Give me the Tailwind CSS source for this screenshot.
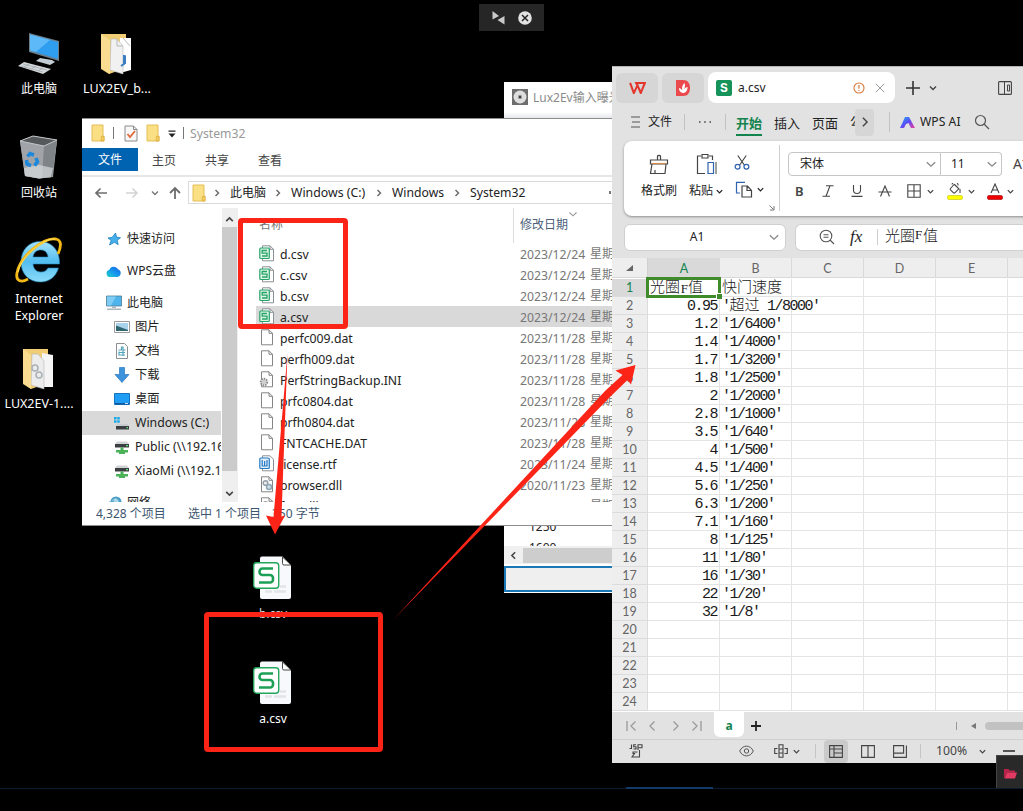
<!DOCTYPE html>
<html lang="zh-CN">
<head>
<meta charset="utf-8">
<title>Desktop</title>
<script src="https://cdn.jsdelivr.net/npm/@tailwindcss/browser@4"></script>
</head>
<body class="bg-black">
<svg class="absolute h-0 w-0">
  <defs>
    <linearGradient id="cg" x1="0" x2="1" y1="1" y2="0"><stop offset="0" stop-color="#22d3c5"/><stop offset=".5" stop-color="#1695f0"/><stop offset="1" stop-color="#1460d8"/></linearGradient>
    <symbol id="folder" viewBox="0 0 14 18"><path d="M1 1h11v11h1v5H1z" fill="#fbdf84" stroke="#e3bd57"/><path d="M10.500 12.500h2.500V17h-3z" fill="#f6cf62" stroke="#dcae3c" stroke-width=".8"/></symbol>
    <symbol id="csv" viewBox="0 0 16 17"><path d="M3.500.8h7.500l3.500 3.500v11.500h-11z" fill="#fff" stroke="#8b9096"/><path d="M11 .8v3.500h3.500" fill="none" stroke="#8b9096"/><rect x=".8" y="3" width="9.500" height="10.500" rx="1" fill="#dff3e8" stroke="#23a566" stroke-width="1.200"/><path d="M8 5.500H3.200v2.700H8V11H3" fill="none" stroke="#23a566" stroke-width="1.300"/></symbol>
    <symbol id="page" viewBox="0 0 16 17"><path d="M2.500.8h7.500l3.500 3.500v11.500h-11z" fill="#fff" stroke="#858585"/><path d="M10 .8v3.500h3.500" fill="none" stroke="#858585"/></symbol>
    <symbol id="ini" viewBox="0 0 16 17"><path d="M2.500.8h7.500l3.500 3.500v11.500h-11z" fill="#fff" stroke="#858585"/><path d="M10 .8v3.500h3.500" fill="none" stroke="#858585"/><circle cx="5" cy="11" r="3.200" fill="#eee" stroke="#8a8a8a" stroke-width="2" stroke-dasharray="1.500 .9"/><circle cx="5" cy="11" r="1.300" fill="#fff" stroke="#999" stroke-width=".7"/></symbol>
    <symbol id="dll" viewBox="0 0 16 17"><path d="M2.500.8h7.500l3.500 3.500v11.500h-11z" fill="#fff" stroke="#858585"/><path d="M10 .8v3.500h3.500" fill="none" stroke="#858585"/><circle cx="6.500" cy="7" r="2.300" fill="#eee" stroke="#93a0a8" stroke-width="1.500"/><circle cx="10" cy="11" r="2.500" fill="#cfe0ea" stroke="#8fa6b4" stroke-width="1.500"/></symbol>
    <symbol id="rtf" viewBox="0 0 16 17"><path d="M3.500.8h7.500l3.500 3.500v11.500h-11z" fill="#fff" stroke="#8b9096"/><rect x=".8" y="3" width="9.500" height="10.500" rx="1" fill="#e3f0fb" stroke="#2679c4" stroke-width="1.200"/><path d="M3.200 5v6h4.800V5M5.600 6v5" fill="none" stroke="#2679c4" stroke-width="1.200"/></symbol>
    <symbol id="star" viewBox="0 0 16 16"><path d="M9.500 2l1 4 4 .8-3.300 2.500 1 4.400-3.700-2.400L3.500 14l1.700-4.500L2 7l4.300-.7z" fill="#45b0ea" stroke="#1c80bf" stroke-width=".8"/></symbol>
    <symbol id="cloud" viewBox="0 0 16 16"><path d="M4 14a3.500 3.500 0 0 1-.8-6.900A4.800 4.800 0 0 1 12 6.300a4 4 0 0 1-.5 7.700z" fill="url(#cg)"/></symbol>
    <symbol id="pc" viewBox="0 0 16 16"><path d="M.5 1h15v10H.5z" fill="#4fb4ec" stroke="#4c7b97" stroke-width=".8"/><path d="M1 1.500h9l-5 9H1z" fill="#7fcdf5"/><path d="M6 11.500h4v1.500H6z" fill="#a7b3ba"/><path d="M1 13.500h14v1.500H1z" fill="#a9b5bc"/></symbol>
    <symbol id="pic" viewBox="0 0 16 16"><path d="M.5 2.500h15v11H.5z" fill="#fff" stroke="#9a9a9a"/><path d="M2 4h12v8H2z" fill="#a8d3ea"/><path d="M2 6.500l4 1.500 8 3v1H2z" fill="#2f6670"/></symbol>
    <symbol id="doc" viewBox="0 0 16 16"><path d="M2.500.5h8l3 3v12h-11z" fill="#fff" stroke="#8a8f93"/><path d="M4.500 7h3V4H9v3h2.500M5 9.500h6M5 12h6M5 8.500v4M9 7v6" fill="none" stroke="#55a5bd" stroke-width="1.200"/></symbol>
    <symbol id="down" viewBox="0 0 16 16"><path d="M5.500.5h5v7h4.500L8 15.500 1 7.500h4.500z" fill="#3c93dc" stroke="#2b77bd" stroke-width=".7"/></symbol>
    <symbol id="desk" viewBox="0 0 16 16"><path d="M.5 2.500h15v11H.5z" fill="#1f9cf3" stroke="#1673bf"/><path d="M1 12h14v1.500H1z" fill="#0c5aa0"/><path d="M11 12.200h3v.8h-3z" fill="#fff"/></symbol>
    <symbol id="drive" viewBox="0 0 16 16"><path d="M0 2h2.600v2.600H0zM3.200 2h2.600v2.600H3.200zM0 5.200h2.600v2.600H0zM3.200 5.200h2.600v2.600H3.200z" fill="#1fa8e6"/><path d="M3 9h11l1 2H2z" fill="#c9cdd0"/><path d="M2 11h13v3.500H2z" fill="#3b3f42"/><path d="M12.500 12h1.500v1.200h-1.500z" fill="#5fe37a"/></symbol>
    <symbol id="net" viewBox="0 0 16 16"><path d="M3 2.500h10l2 2.500H1z" fill="#d0d3d5"/><path d="M1 5h14v3.500H1z" fill="#3b3f42"/><path d="M12 6h2v1.200h-2z" fill="#5fe37a"/><path d="M6.500 8.500h3V11H14v2.500h-3V15H5v-1.500H2V11h4.500z" fill="#4bb25a"/></symbol>
    <symbol id="globe" viewBox="0 0 16 16"><circle cx="10" cy="7" r="5.500" fill="#4a9cc4"/><path d="M6 5l4-2 3 3-2 3H7z" fill="#a8d8ea"/><path d="M1 7.500l7-2.500v9H1z" fill="#5cabc9"/></symbol>
    <symbol id="chev" viewBox="0 0 10 10"><path d="M2 3.500l3 3 3-3" fill="none" stroke="currentColor" stroke-width="1.400"/></symbol>
    <symbol id="thin" viewBox="0 0 10 10"><path d="M1.500 3.500l3.500 3.300 3.500-3.300" fill="none" stroke="currentColor" stroke-width="1.100"/></symbol>
    <symbol id="next" viewBox="0 0 10 10"><path d="M3.500 2l3 3-3 3" fill="none" stroke="currentColor" stroke-width="1.400"/></symbol>
    <symbol id="bigcsv" viewBox="0 0 40 44"><path d="M9 .5h20.500L38 9v32a2 2 0 0 1-2 2H9a2 2 0 0 1-2-2V2.500a2 2 0 0 1 2-2z" fill="#f7f9fc"/><path d="M29.500 1v6.500a1.500 1.500 0 0 0 1.500 1.500h7z" fill="#fff" stroke="#333" stroke-width=".9"/><path d="M12 35.500h7M21 35.500h12M27 30.500h6" stroke="#e2e5e8" stroke-width="2.500"/><rect x=".7" y="6.700" width="25" height="25.500" rx="3" fill="#fff" stroke="#23a55c" stroke-width="1.400"/><path d="M20 12.500H9.500a3 3 0 0 0-3 3v.5a3 3 0 0 0 3 3h7.500a3 3 0 0 1 3 3v1.500a3 3 0 0 1-3 3H6" fill="none" stroke="#1ca056" stroke-width="2.600"/></symbol>
  </defs>
</svg>
<main class="relative h-[811px] w-[1023px] overflow-hidden bg-black font-['Noto_Sans','Noto_Sans_CJK_SC',sans-serif] text-[12px] leading-4">

  <!-- Desktop icons -->
  <div class="absolute left-0 top-[31px] flex w-[78px] flex-col items-center text-[12px] text-white">
    <svg class="h-[44px] w-[44px]" viewBox="0 0 44 44"><path d="M12 2l30 8v20L12 21z" fill="#6d7e8a"/><path d="M13 3.500l28 7.500v17L13 19.500z" fill="#2f9df0"/><path d="M13 3.500l20 5.500-14 12-6-1.500z" fill="#5db9f8"/><path d="M23 27l12 2 3 2-5 3-14-4z" fill="#c3cdd3"/><path d="M7 31l27 7-8 5L1 35z" fill="#d5d9dc"/><path d="M6 33l24 6M4 35l22 6M12 33l-5 3M19 35l-5 3M26 37l-5 3" stroke="#9aa3a8" stroke-width=".7"/></svg>
    <span class="mt-[6px]">此电脑</span>
  </div>
  <div class="absolute left-[78px] top-[31px] flex w-[78px] flex-col items-center text-[12px] text-white">
    <svg class="h-[44px] w-[34px]" viewBox="0 0 34 44"><path d="M1 3h25v34l-17 6-8-5z" fill="#f1cd76"/><path d="M20 7h11v32l-11 3z" fill="#fff"/><path d="M23 26l3-2v9h-5l-1-3z" fill="#3a7fc4"/><path d="M11 8h6l6 7v28l-13-4z" fill="#f1f1f1" stroke="#b5b5b5" stroke-width=".6"/><path d="M17 8v7h6M23 7l7 8" fill="none" stroke="#aaa" stroke-width=".8"/><path d="M24 24v9l-3 2" fill="none" stroke="#3a7fc4" stroke-width="2"/><path d="M1 3l9 6v34l-9-6z" fill="#f9dc90"/></svg>
    <span class="mt-[6px] text-[12.500px]">LUX2EV_b...</span>
  </div>
  <div class="absolute left-0 top-[135px] flex w-[78px] flex-col items-center text-[12px] text-white">
    <svg class="h-[44px] w-[40px]" viewBox="0 0 40 44"><path d="M1 6l13-5 24 4-4 37-14 1.500L6 41z" fill="#9a9fa3"/><path d="M1 6l24 5 13-6-5 37-13 1.500L6 41z" fill="#a0a4a8"/><path d="M25 11l13-6-5 37-10 1z" fill="#7f8488"/><path d="M1 6l13-5 24 4-13 6z" fill="#55595c" stroke="#c3c6c8"/><path d="M5 33l15-3 14 3-2 9-12 1.500L6 41z" fill="#d9dcde" opacity=".7"/><g fill="none" stroke="#1b87dd" stroke-width="3.500"><path d="M8.500 21.500L11 18.500l4 1.500"/><path d="M17 23l1.500 4-3 3.500"/><path d="M12 30.500L8 29l-.5-4"/></g></svg>
    <span class="mt-[6px]">回收站</span>
  </div>
  <div class="absolute left-0 top-[237px] flex w-[78px] flex-col items-center text-center text-[12.400px] text-white">
    <svg class="h-[50px] w-[50px]" viewBox="0 0 50 50"><defs><linearGradient id="ie" x1="0" x2="0" y1="0" y2="1"><stop offset="0" stop-color="#a5e3fb"/><stop offset=".5" stop-color="#53bdf0"/><stop offset="1" stop-color="#8bdcf9"/></linearGradient></defs><path d="M26 4.500c12 0 20 9 19.500 22.500H19c.5 5 3.500 8 8 8 3.500 0 5.500-1.500 7-4h10.500C42 39.500 35.500 45 26.500 45 15 45 7 37 7 25S15 4.500 26 4.500zM19 20h15c-.5-4.500-3-7-7.300-7-4.200 0-7 2.500-7.700 7z" fill="url(#ie)" stroke="#1f7fb8" stroke-width=".6"/><path d="M44 17C48 8 47 3 42 2 30 0 6 19 3 36c-1.500 8 4 10 11 6" fill="none" stroke="#f5b915" stroke-width="2.800"/><path d="M41 2C30 1 8 18 4 35" fill="none" stroke="#ffe468" stroke-width="1"/></svg>
    <span class="mt-[3px] leading-[17px]">Internet<br>Explorer</span>
  </div>
  <div class="absolute left-0 top-[346px] flex w-[78px] flex-col items-center text-[12.500px] text-white">
    <svg class="h-[44px] w-[34px]" viewBox="0 0 34 44"><path d="M1 3h25v34l-17 6-8-5z" fill="#f1cd76"/><path d="M20 7l11 2v32H20z" fill="#f5f5f5"/><path d="M10 8h6l6 7v28l-13-4z" fill="#ececec" stroke="#b5b5b5" stroke-width=".6"/><circle cx="13" cy="22" r="3" fill="none" stroke="#aab2b8" stroke-width="1.600"/><circle cx="17" cy="29" r="3" fill="none" stroke="#aab2b8" stroke-width="1.600"/><path d="M1 3l8 6v34l-8-6z" fill="#f9dc90"/></svg>
    <span class="mt-[6px]">LUX2EV-1....</span>
  </div>
  <div class="absolute left-[234px] top-[556px] flex w-[78px] flex-col items-center text-[12px] text-gray-300">
    <svg class="h-[44px] w-[40px]"><use href="#bigcsv"/></svg><span class="mt-[6px]">b.csv</span>
  </div>
  <div class="absolute left-[234px] top-[661px] flex w-[78px] flex-col items-center text-[12px] text-white">
    <svg class="h-[44px] w-[40px]"><use href="#bigcsv"/></svg><span class="mt-[6px]">a.csv</span>
  </div>

  <!-- Remote session toolbar -->
  <div class="absolute left-[479px] top-[4px] flex h-[27px] w-[65px] items-center justify-center gap-[13px] bg-[#262626]">
    <svg class="h-[14px] w-[13px]" viewBox="0 0 13 14"><path d="M.5 0v8.500L7 5zM12.500 5v8.500L5.500 9z" fill="#c9c9c9"/></svg>
    <svg class="h-[14px] w-[14px]" viewBox="0 0 14 14"><circle cx="7" cy="7" r="6.800" fill="#e2e2e2"/><path d="M4 4l6 6M10 4l-6 6" stroke="#262626" stroke-width="1.500"/></svg>
  </div>

  <!-- Lux2Ev window -->
  <section class="absolute left-[504px] top-[82px] flex h-[511px] w-[108px] flex-col overflow-hidden bg-white">
    <header class="flex h-[30px] shrink-0 items-center gap-[5px] whitespace-nowrap pl-[8px] text-[#8b8b8b]">
      <svg class="h-4 w-4 shrink-0" viewBox="0 0 16 16"><path d="M0 0h16v16H0z" fill="#6d6d6d"/><circle cx="8" cy="8" r="6.500" fill="#dedede"/><circle cx="8" cy="8" r="2.200" fill="#999"/><circle cx="8" cy="8" r="1" fill="#222"/></svg>
      <span class="pt-px">Lux2Ev输入曝光</span>
    </header>
    <div class="h-[406px] shrink-0 bg-gradient-to-b from-white to-gray-200 to-[6px]"></div>
    <div class="flex h-[28px] shrink-0 flex-col overflow-hidden bg-white pl-[25px] text-[12px] leading-[21px] text-[#222]"><span class="-mt-[2px] h-[21px] shrink-0">1250</span><span class="h-[21px] shrink-0">1600</span></div>
    <div class="flex h-[18px] shrink-0 items-center bg-[#f0f0f0]"><svg class="mx-[4px] h-[11px] w-[11px] rotate-90 text-[#444]"><use href="#chev"/></svg><div class="h-[15px] flex-1 bg-[#cdcdcd]"></div></div>
    <div class="mt-[2px] h-[26px] shrink-0 border-2 border-r-0 border-[#1a78b5] bg-[#efefef]"></div>
  </section>

  <!-- File explorer window -->
  <section class="absolute left-[82px] top-[118px] flex h-[408px] w-[530px] flex-col overflow-hidden border-b border-t border-[#8d8d8d] bg-white text-[#222]">
    <header class="flex h-[28px] shrink-0 items-center pl-[9px]">
      <svg class="h-[18px] w-[14px]"><use href="#folder"/></svg>
      <i class="ml-[8px] h-3 w-px bg-[#777]"></i>
      <svg class="ml-[10px] h-[17px] w-[14px]" viewBox="0 0 14 17"><path d="M1 1h8.500L13 4.500V16H1z" fill="#f7f7f7" stroke="#8a8a8a"/><path d="M9.500 1v3.500H13" fill="none" stroke="#8a8a8a"/><path d="M3.500 9l2.500 3 5-6" fill="none" stroke="#e0693a" stroke-width="1.800"/></svg>
      <svg class="ml-[8px] h-[18px] w-[14px]"><use href="#folder"/></svg>
      <svg class="ml-[8px] mt-[2px] h-[8px] w-[8px]" viewBox="0 0 8 8"><path d="M.5.5h7v1.200h-7zM.5 3.500h7L4 7.500z" fill="#222"/></svg>
      <i class="ml-[7px] h-3 w-px bg-[#777]"></i>
      <span class="ml-[6px] pt-px text-[12.200px] text-[#999]">System32</span>
    </header>
    <nav class="flex h-[30px] shrink-0 items-start border-b-2 border-[#e6e6e6] pt-px text-[#444]">
      <span class="flex h-[23px] w-[56px] items-center justify-center bg-[#0063b1] text-white">文件</span>
      <span class="ml-[14px] leading-[26px]">主页</span><span class="ml-[29px] leading-[26px]">共享</span><span class="ml-[29px] leading-[26px]">查看</span>
    </nav>
    <div class="flex h-[31px] shrink-0 items-center pl-[12px] text-[#777]">
      <svg class="h-3 w-[14px]" viewBox="0 0 14 12"><path d="M13 6H2M6.500 1.500L2 6l4.500 4.500" fill="none" stroke="#6d6d6d" stroke-width="1.700"/></svg>
      <svg class="ml-[17px] h-3 w-[14px]" viewBox="0 0 14 12"><path d="M1 6h11M7.500 1.500L12 6l-4.500 4.500" fill="none" stroke="#d4d4d4" stroke-width="1.600"/></svg>
      <svg class="ml-[11px] h-[10px] w-[10px]"><use href="#chev"/></svg>
      <svg class="ml-[8px] h-[14px] w-[14px]" viewBox="0 0 14 14"><path d="M7 13V2M2 7l5-5 5 5" fill="none" stroke="#6d6d6d" stroke-width="1.800"/></svg>
      <div class="ml-[6px] flex h-[23px] flex-1 items-center border border-r-0 border-[#dadada] pl-[3px] text-[12.200px] text-[#222]">
        <svg class="h-[18px] w-[14px]"><use href="#folder"/></svg>
        <svg class="ml-[6px] h-[10px] w-[10px] text-[#666]"><use href="#next"/></svg><span class="ml-[8px] w-[36px] whitespace-nowrap text-[12px]">此电脑</span>
        <svg class="ml-[7px] h-[10px] w-[10px] text-[#666]"><use href="#next"/></svg><span class="ml-[8px] w-[76px] whitespace-nowrap text-[12.300px]">Windows (C:)</span>
        <svg class="ml-[7px] h-[10px] w-[10px] text-[#666]"><use href="#next"/></svg><span class="ml-[8px] w-[53px]">Windows</span>
        <svg class="ml-[7px] h-[10px] w-[10px] text-[#666]"><use href="#next"/></svg><span class="ml-[8px]">System32</span>
        <i class="ml-auto mr-px h-[3px] w-[2px] bg-[#777]"></i>
      </div>
    </div>
    <div class="flex h-[294px] shrink-0 overflow-hidden">
      <aside id="tree" class="flex w-[139px] shrink-0 flex-col overflow-hidden pt-[10px]"></aside>
      <div class="ml-px flex w-4 shrink-0 flex-col bg-[#efefef] pt-[6px] text-[#444]">
        <svg class="mx-[2px] h-[11px] w-[11px] rotate-180"><use href="#chev"/></svg>
        <div class="mt-[2px] h-[244px] w-[15px] bg-[#cbcbcb]"></div>
        <svg class="mx-[2px] mt-[17px] h-[11px] w-[11px]"><use href="#chev"/></svg>
      </div>
      <div class="flex flex-1 flex-col pl-[18px]">
        <div class="flex h-[35px] shrink-0 text-[#4c607a]">
          <span class="w-[257px] pl-[3px] pt-[9px] text-[#777]">名称</span>
          <div class="flex items-start border-l border-[#ddd] pl-[6px] pt-[9px]">修改日期</div>
          <svg class="mt-[1px] h-[10px] w-[10px] text-[#999]"><use href="#thin"/></svg>
        </div>
        <div id="files" class="flex flex-col"></div>
      </div>
    </div>
    <footer class="flex h-[23px] shrink-0 items-center bg-white pl-[14px] text-[#3d5670]">
      <span class="w-[92px]">4,328 个项目</span><span class="w-[84px]">选中 1 个项目</span><span>350 字节</span>
    </footer>
  </section>

  <!-- WPS spreadsheet window -->
  <section class="absolute left-[612px] top-[66px] flex h-[697px] w-[411px] flex-col overflow-hidden border-t border-[#b5b5b5] bg-[#e2e2e2] text-[#222]">
    <header class="flex h-[38px] shrink-0 items-center pl-[4px] pt-[3px]">
      <span class="flex h-[30px] w-[42px] items-center justify-center rounded-md bg-[#d6d6d6]"><svg class="h-[12px] w-[17px]" viewBox="0 0 18 13"><path d="M1 1l4 11L9 3.500 12.500 12 17 1H7.500l4 8" fill="none" stroke="#e5352d" stroke-width="2.200"/></svg></span>
      <span class="ml-[4px] flex h-[30px] w-[42px] items-center justify-center rounded-md bg-[#d6d6d6]"><svg class="h-4 w-[14px]" viewBox="0 0 14 16"><path d="M0 0h7c5 0 7 3.500 7 8s-2 8-7 8H0z" fill="#ea4a4e"/><path d="M6.800 13C4 12.500 3 10.500 3 8c2 .5 3 1.500 3.500 3C5.500 8 6 5 8.500 3c.8 2 .6 4-.5 6.500C9 8 10 7.200 11.500 7c0 3.500-1.500 6-4.700 6z" fill="#fff"/></svg></span>
      <div class="ml-[4px] flex h-[31px] w-[187px] items-center rounded-lg bg-white pl-[8px] pr-[10px]">
        <span class="flex h-4 w-4 items-center justify-center rounded-[2px] bg-[#14935a] font-['Inter',sans-serif] text-[12px] font-bold text-white">S</span>
        <span class="ml-[6px] flex-1 pt-px">a.csv</span>
        <svg class="h-3 w-3" viewBox="0 0 12 12"><circle cx="6" cy="6" r="5" fill="none" stroke="#d9783a" stroke-width="1.100"/><path d="M6 3v3.800M6 8v1" stroke="#d9783a" stroke-width="1.200"/></svg>
        <svg class="ml-[10px] h-[10px] w-[10px]" viewBox="0 0 10 10"><path d="M.8.800l8.400 8.400M9.200.8L.8 9.200" stroke="#9a9a9a"/></svg>
      </div>
      <svg class="ml-[11px] h-[14px] w-[14px]" viewBox="0 0 14 14"><path d="M7 0v14M0 7h14" stroke="#333" stroke-width="1.600"/></svg>
      <svg class="ml-[8px] h-[10px] w-[10px] text-[#444]"><use href="#chev"/></svg>
      <svg class="ml-[60px] h-[14px] w-[14px] shrink-0" viewBox="0 0 14 14"><rect x=".6" y=".6" width="12.800" height="12.800" rx="1" fill="none" stroke="#444" stroke-width="1.100"/><path d="M6.500 1v12M9.500 4h2v6h-2z" fill="none" stroke="#444"/></svg>
    </header>
    <nav class="flex h-[36px] shrink-0 items-center whitespace-nowrap pb-[2px] pl-[19px]">
      <svg class="h-3 w-[9px]" viewBox="0 0 9 12"><path d="M0 1h9M1 6h8M0 11h9" stroke="#555" stroke-width="1.100"/></svg>
      <span class="ml-[8px] w-[24px]">文件</span><i class="ml-[12px] h-4 w-px bg-[#c2c2c2]"></i>
      <svg class="ml-[13px] h-[4px] w-[14px]" viewBox="0 0 14 4"><path d="M1 2h1.500M6.200 2h1.500M11.500 2H13" stroke="#444" stroke-width="1.500"/></svg>
      <i class="ml-[13px] h-4 w-px bg-[#c2c2c2]"></i>
      <span class="ml-[10px] flex h-[27px] w-[26px] flex-col border-b-2 border-[#14844f] pt-[6px] text-[13px] font-bold text-[#14844f]">开始</span>
      <span class="ml-[12px] pt-px text-[13px]">插入</span><span class="ml-[12px] pt-px text-[13px]">页面</span>
      <span class="ml-[12px] w-[5px] overflow-hidden">公</span>
      <span class="flex h-[27px] w-[19px] items-center justify-center rounded bg-[#d6d6d6]"><svg class="h-[14px] w-[14px] text-[#444]" viewBox="0 0 10 10"><path d="M3.500 2l3 3-3 3" fill="none" stroke="currentColor"/></svg></span>
      <i class="ml-[15px] h-5 w-px bg-[#c2c2c2]"></i>
      <svg class="ml-[10px] h-[13px] w-[15px]" viewBox="0 0 15 13"><defs><linearGradient id="ai" x1="0" x2="1" y1="0" y2="1"><stop offset="0" stop-color="#1bb0f5"/><stop offset=".5" stop-color="#5b4df5"/><stop offset="1" stop-color="#f13f9a"/></linearGradient></defs><path d="M5 1h4l6 11h-4L8.500 7 6 8l-2 4H0z" fill="url(#ai)"/></svg>
      <span class="ml-[5px] w-[42px] text-[12.200px]">WPS AI</span>
      <svg class="ml-[12px] h-4 w-4" viewBox="0 0 16 16"><circle cx="6.500" cy="6.500" r="5" fill="none" stroke="#555" stroke-width="1.200"/><path d="M10 10l5 5" stroke="#555" stroke-width="1.300"/></svg>
    </nav>
    <div class="ml-[12px] flex h-[75px] w-[420px] shrink-0 rounded-lg bg-white shadow-sm shadow-black/30">
      <div class="my-1 flex h-[66px] w-[156px] shrink-0 border-r border-[#cfcfcf]">
        <div class="ml-[17px] flex w-[36px] flex-col items-center pt-[8px]">
          <svg class="h-[22px] w-5" viewBox="0 0 20 22"><path d="M8.500 7V3a2 2 0 0 1 3 0v4M1.500 7h17v4h-17zM3 11L1.500 20.500H16L17 11M6 17v3.500" fill="none" stroke="#444" stroke-width="1.200"/><path d="M3 10.500h14" stroke="#d98b4a" stroke-width="1.200"/></svg>
          <span class="mt-[8px] whitespace-nowrap">格式刷</span>
        </div>
        <div class="ml-[12px] flex w-[34px] flex-col pt-[8px]">
          <svg class="ml-[7px] h-[22px] w-[21px]" viewBox="0 0 21 22"><path d="M5 3H1.500v17.500H9M13 3h3.500v4M6 1.500h6V5H6z" fill="none" stroke="#444" stroke-width="1.200"/><path d="M12 9.500h5.500v11H12z" fill="#fff" stroke="#2f63b0" stroke-width="1.200"/><path d="M20 9v12" stroke="#444"/></svg>
          <div class="mt-[8px] flex items-center whitespace-nowrap">粘贴<svg class="ml-[2px] h-[9px] w-[9px] shrink-0" viewBox="0 0 10 10"><use href="#chev"/></svg></div>
        </div>
        <div class="ml-[11px] flex flex-1 flex-col pt-[10px]">
          <svg class="h-4 w-4" viewBox="0 0 16 16"><path d="M3.500.5l7.500 11M12.500.5L5 11.500" stroke="#444" stroke-width="1.200"/><circle cx="3.300" cy="12.500" r="2.600" fill="none" stroke="#2f63b0" stroke-width="1.300"/><circle cx="12.700" cy="12.500" r="2.600" fill="none" stroke="#2f63b0" stroke-width="1.300"/></svg>
          <div class="mt-[11px] flex items-center"><svg class="ml-px h-[17px] w-[18px]" viewBox="0 0 18 16"><path d="M5 11.500H1.500V.8H10" fill="none" stroke="#2f63b0" stroke-width="1.200"/><path d="M7 4.500h5.500L16.500 9v6.500H7zM12 5v4h4" fill="#fff" stroke="#444" stroke-width="1.200"/></svg><svg class="ml-[3px] h-[9px] w-[9px]" viewBox="0 0 10 10"><use href="#chev"/></svg></div>
          <svg class="ml-[35px] mt-[7px] h-[6px] w-[6px] shrink-0" viewBox="0 0 6 6"><path d="M.5.500l4 4M5 1v4H1" fill="none" stroke="#777"/></svg>
        </div>
      </div>
      <div class="flex flex-1 flex-col pl-[8px] pt-[11px]">
        <div class="flex items-center">
          <div class="flex h-[24px] w-[153px] items-center justify-between rounded-l border border-[#c6c6c6] pl-[11px] pr-[3px]"><span>宋体</span><svg class="h-[12px] w-[12px] text-[#888]" viewBox="0 0 10 10"><use href="#thin"/></svg></div>
          <div class="flex h-[24px] w-[61px] items-center justify-between rounded-r border border-l-0 border-[#c6c6c6] pl-[10px] pr-[3px]"><span>11</span><svg class="h-[12px] w-[12px] text-[#888]" viewBox="0 0 10 10"><use href="#thin"/></svg></div>
          <span class="ml-[11px] flex text-[14px] text-[#444]">A<span class="-mt-1 text-[10px]">+</span></span>
        </div>
        <div class="mt-[5px] flex items-center text-[#444]">
          <span class="ml-[7px] w-[9px] text-[13px] font-semibold leading-5">B</span>
          <svg class="ml-[18px] h-3 w-3" viewBox="0 0 12 12"><path d="M4 .8h7.500M.5 11.200H8M8 .8L4 11.200" fill="none" stroke="#444" stroke-width="1.100"/></svg>
          <svg class="ml-[17px] h-3 w-3" viewBox="0 0 12 12"><path d="M2.500 0v5a3.500 3.500 0 0 0 7 0V0M.5 11.400h11" fill="none" stroke="#444" stroke-width="1.100"/></svg>
          <svg class="ml-[15px] h-3 w-[14px]" viewBox="0 0 14 12"><path d="M2.500 11.500L7 1l4.500 10.500M.5 7h13" fill="none" stroke="#444" stroke-width="1.100"/></svg>
          <svg class="ml-[15px] h-[14px] w-[14px]" viewBox="0 0 14 14"><path d="M.8.800h12.400v12.400H.8zM7 1v12M1 7h12" fill="none" stroke="#444" stroke-width="1.100"/></svg>
          <svg class="ml-[5px] h-[9px] w-[9px]" viewBox="0 0 10 10"><use href="#chev"/></svg>
          <svg class="ml-[12px] h-[17px] w-4" viewBox="0 0 16 17"><path d="M7.500 1L3.500 5.500a1 1 0 0 0 0 1.300l3 3a1 1 0 0 0 1.300 0l4-4L7.500 1.500M5 1.500a3 3 0 0 1 6 1M13 6v4" fill="none" stroke="#444" stroke-width="1.100"/><rect x=".5" y="12.500" width="15" height="4" rx="1.500" fill="#ff0" stroke="#c8c818" stroke-width=".7"/></svg>
          <svg class="ml-[4px] h-[9px] w-[9px]" viewBox="0 0 10 10"><use href="#chev"/></svg>
          <svg class="ml-[11px] h-[17px] w-4" viewBox="0 0 16 17"><path d="M4 10L8 1l4 9M5.500 7h5" fill="none" stroke="#444" stroke-width="1.100"/><rect x=".5" y="12.500" width="15" height="4" rx="1.500" fill="#f00000" stroke="#a81414" stroke-width=".7"/></svg>
          <svg class="ml-[3px] h-[9px] w-[9px]" viewBox="0 0 10 10"><use href="#chev"/></svg>
        </div>
      </div>
    </div>
    <div class="flex h-[42px] shrink-0 items-center pl-[12px]">
      <div class="flex h-[27px] w-[162px] shrink-0 items-center rounded-md border border-[#d0d0d0] bg-white pr-[5px]"><span class="flex-1 pl-[1px] text-center text-[12px]">A1</span><svg class="h-[12px] w-[12px] text-[#888]" viewBox="0 0 10 10"><use href="#thin"/></svg></div>
      <div class="ml-[9px] flex h-[27px] flex-1 items-center rounded-l-md border border-r-0 border-[#d0d0d0] bg-white pl-[23px]">
        <svg class="h-4 w-4" viewBox="0 0 16 16"><circle cx="7" cy="7" r="5.800" fill="none" stroke="#555" stroke-width="1.100"/><path d="M4.500 5.700h5M4.500 8.200h5M11 11l4 4" stroke="#555" stroke-width="1.100"/></svg>
        <span class="ml-[15px] w-[16px] font-['Liberation_Serif',serif] text-[17px] italic">fx</span><i class="ml-[11px] h-4 w-px bg-[#ccc]"></i><span class="-mt-[4px] ml-[7px] flex items-center font-['Noto_Sans_CJK_SC',sans-serif] text-[15px] font-light">光圈<span class="w-[8px] font-['Liberation_Serif',serif] text-[13px]">F</span>值</span>
      </div>
    </div>
    <div class="flex h-[20px] shrink-0 border-b border-[#d8d8d8] bg-[#eee] text-center font-['Lato',sans-serif] text-[12.500px] leading-[21px] text-[#666]">
      <span class="flex w-[36px] items-center justify-center border-r border-[#d0d0d0]"><svg class="h-[6px] w-[7px]" viewBox="0 0 7 6"><path d="M7 0v6H0z" fill="#666"/></svg></span>
      <span class="w-[72px] bg-[#d9d9d9] text-[#14844f]">A</span><span class="w-[72px] border-r border-[#dadada]">B</span><span class="w-[72px] border-r border-[#dadada]">C</span><span class="w-[72px] border-r border-[#dadada]">D</span><span class="w-[72px] border-r border-[#dadada]">E</span><span class="flex-1"></span>
    </div>
    <div id="grid" class="flex h-[434px] shrink-0 flex-col bg-white pt-px"></div>
    <div class="flex h-[27px] shrink-0 items-center pl-[14px] text-[#999]">
      <svg class="h-3 w-[76px]" viewBox="0 0 76 12"><path d="M1 1v10M9.500 1.500L5 6l4.500 4.500M28.500 1.500L24 6l4.500 4.500M47.500 1.500L52 6l-4.500 4.500M66.500 1.500L71 6l-4.500 4.500M75 1v10" fill="none" stroke="#999" stroke-width="1.300"/></svg>
      <span class="ml-[12px] flex h-[25px] w-[30px] items-center justify-center self-start rounded-b-md bg-white pt-[2px] font-bold text-[#14844f]">a</span>
      <svg class="ml-[7px] h-[10px] w-[10px]" viewBox="0 0 10 10"><path d="M5 0v10M0 5h10" stroke="#222" stroke-width="1.800"/></svg>
      <i class="ml-[195px] h-2 w-px bg-[#999]"></i><svg class="ml-[14px] h-[6px] w-[5px]" viewBox="0 0 5 6"><path d="M5 0v6L0 3z" fill="#777"/></svg><i class="ml-[9px] h-[8px] flex-1 rounded-l bg-[#c2c2c2]"></i>
    </div>
    <footer class="flex h-[24px] shrink-0 items-center border-t border-[#d0d0d0] pb-px pl-[17px] text-[#444]">
      <svg class="h-[14px] w-[14px]" viewBox="0 0 14 14"><path d="M2.500.5v4H.5M7 .7H4.700v2H7V5H4.500M9 6V.7h4v3H9M8.500 8H4v1.500h1.500L3 13h7.500V6" fill="none" stroke="#444" stroke-width="1.100"/></svg>
      <svg class="ml-[96px] h-[14px] w-[15px]" viewBox="0 0 15 14"><path d="M.7 7c3-6.500 10.600-6.500 13.600 0-3 6.500-10.600 6.500-13.600 0z" fill="none" stroke="#555"/><circle cx="7.500" cy="7" r="2.200" fill="none" stroke="#555"/></svg>
      <svg class="ml-[20px] h-[14px] w-[14px]" viewBox="0 0 14 14"><path d="M5 .7h4v12.600H5zM5 5h4M5 9h4M3.500 4.500H.7v5h2.800M10.500 4.500h2.800v5h-2.800" fill="none" stroke="#444" stroke-width="1.100"/></svg>
      <svg class="ml-[4px] h-[9px] w-[9px]" viewBox="0 0 10 10"><use href="#chev"/></svg>
      <i class="ml-[14px] h-[14px] w-px bg-[#c5c5c5]"></i>
      <span class="ml-[8px] flex h-[23px] w-[24px] items-center justify-center rounded bg-[#cacaca]"><svg class="h-[13px] w-[14px]" viewBox="0 0 14 13"><path d="M.6.600h12.800v11.800H.6zM5 1v11.500M1 4h12.500M5 8h8.500" fill="none" stroke="#444" stroke-width="1.100"/></svg></span>
      <svg class="ml-[13px] h-[13px] w-[14px]" viewBox="0 0 14 13"><path d="M.6.600h12.800v11.800H.6zM7 1v11.500" fill="none" stroke="#444" stroke-width="1.100"/></svg>
      <svg class="ml-[18px] h-[13px] w-[14px]" viewBox="0 0 14 13"><path d="M.6.600h10v7.500H.6zM.6 8v4.400h12.800V.6M3 12.400h7" fill="none" stroke="#444" stroke-width="1.100"/></svg>
      <i class="ml-[13px] h-[14px] w-px bg-[#c5c5c5]"></i>
      <span class="ml-[15px] w-[33px] whitespace-nowrap text-[12.200px]">100%</span><svg class="ml-[9px] h-[9px] w-[9px]" viewBox="0 0 10 10"><use href="#chev"/></svg>
      <i class="ml-[16px] h-[2px] w-3 bg-[#555]"></i>
    </footer>
  </section>

  <!-- Taskbar edge and floating folder button -->
  <div class="absolute left-0 top-[788px] h-px w-full bg-[#0a1c30]"></div>
  <div class="absolute left-[626px] top-[787px] h-[2px] w-[87px] bg-[#123a6b]"></div>
  <div class="absolute left-[996px] top-[755px] flex h-[33px] w-[27px] items-center justify-center border-l border-t border-[#444] bg-[#292929] pt-[3px]">
    <svg class="h-[11px] w-[13px]" viewBox="0 0 13 11"><path d="M0 1h4.500l1 1.500H11V4.500H3L1 10H0z" fill="#b8234a"/><path d="M3 4.500h10L11 10.500H.8z" fill="#e23a63"/></svg>
  </div>

  <!-- Red annotations -->
  <div class="absolute left-[238px] top-[218px] h-[111px] w-[110px] rounded-[4px] border-[5px] border-[#fb2416]"></div>
  <div class="absolute left-[204px] top-[612px] h-[140px] w-[179px] rounded-[4px] border-[5px] border-[#fb2416]"></div>
  <svg class="absolute left-0 top-0" width="1023" height="811" viewBox="0 0 1023 811"><path d="M287.500 353L281.500 516.500 285 515.500 275 534.500 266 515.500 273.500 517z" fill="#fb2416"/><path d="M393 620L605 391 622.500 375 615.500 370.500 635.500 365 631 384.500 627.500 380 610 397z" fill="#fb2416"/></svg>
</main>
<script>
const tree = [
  ['star','快速访问',0],['cloud','WPS云盘',0],['pc','此电脑',0],['pic','图片',1],['doc','文档',1],['down','下载',1],
  ['desk','桌面',1],['drive','Windows (C:)',1],['net','Public (\\\\192.168',1],['net','XiaoMi (\\\\192.168',1],['globe','网络',0]
];
document.getElementById('tree').innerHTML = tree.map(([icon, name, level], i) =>
  `<div class="flex h-6 shrink-0 items-center gap-[5px] whitespace-nowrap ${level ? 'pl-8' : i ? 'mt-2 pl-6' : 'mt-[9px] pl-6'} ${icon === 'drive' ? 'bg-[#d9d9d9]' : ''}"><svg class="h-4 w-4 shrink-0"><use href="#${icon}"/></svg><span class="${level ? 'text-[12.300px]' : 'text-[12px]'}">${name}</span></div>`).join('');

const files = [
  ['csv','d.csv','2023/12/24'],['csv','c.csv','2023/12/24'],['csv','b.csv','2023/12/24'],['csv','a.csv','2023/12/24'],
  ['page','perfc009.dat','2023/11/28'],['page','perfh009.dat','2023/11/28'],['ini','PerfStringBackup.INI','2023/11/28'],
  ['page','prfc0804.dat','2023/11/28'],['page','prfh0804.dat','2023/11/28'],['page','FNTCACHE.DAT','2023/11/28'],
  ['rtf','license.rtf','2023/11/24'],['dll','browser.dll','2020/11/23'],['dll','fms.dll','2020/11/23']
];
document.getElementById('files').innerHTML = files.map(([icon, name, date]) =>
  `<div class="flex h-[21px] shrink-0 items-center whitespace-nowrap pl-[3px] ${name === 'a.csv' ? 'bg-[#d9d9d9]' : ''}"><svg class="h-[17px] w-4 shrink-0"><use href="#${icon}"/></svg><span class="ml-[5px] w-[240px] pt-[2px] text-[12.250px]">${name}</span><span class="w-[70px] pt-[2px] text-[12.250px] text-[#777]">${date}</span><span class="pt-px text-[#777]">星期日</span></div>`).join('');

const cells = [
  ['0.95',''],['1.2',"'1/6400'"],['1.4',"'1/4000'"],['1.7',"'1/3200'"],['1.8',"'1/2500'"],['2',"'1/2000'"],['2.8',"'1/1000'"],
  ['3.5',"'1/640'"],['4',"'1/500'"],['4.5',"'1/400'"],['5.6',"'1/250'"],['6.3',"'1/200'"],['7.1',"'1/160'"],['8',"'1/125'"],
  ['11',"'1/80'"],['16',"'1/30'"],['22',"'1/20'"],['32',"'1/8'"]
];
let rows = '';
for (let n = 1; n <= 24; n++) {
  let a = '', b = '';
  if (n === 1) {
    a = `<span class="flex items-center pl-[2px] tracking-normal"><span>光圈</span><span class="w-[8px] font-['Liberation_Serif',serif] text-[13px]">F</span><span>值</span></span><i class="absolute -left-[2px] -top-[2px] h-[21px] w-[75px] border-[3px] border-[#3f8a2b]"></i><i class="absolute -bottom-[3px] -right-[3px] size-[6px] border-l border-t border-white bg-[#3f8a2b]"></i>`;
    b = `<span class="tracking-normal">快门速度</span>`;
  } else if (n === 2) {
    a = cells[0][0];
    b = `'<span class="tracking-normal">超过</span> 1/8000'`;
  } else if (cells[n - 2]) { [a, b] = cells[n - 2]; }
  rows += `<div class="flex h-[18px] shrink-0 text-[15px] leading-[20px] tracking-[-1.500px] text-[#1a1a1a]">
    <span class="w-[36px] shrink-0 border-b border-r border-[#dcdcdc] ${n === 1 ? 'bg-[#d9d9d9] text-[#14844f]' : 'bg-[#eee] text-[#666]'} text-center font-['Lato',sans-serif] text-[12.500px] leading-[18px] tracking-normal">${n}</span>
    <span class="relative w-[72px] shrink-0 whitespace-nowrap border-b border-r border-[#e4e4e4] text-right font-['Liberation_Mono','Noto_Sans_CJK_SC',monospace] font-light ${n === 1 ? 'z-10' : 'pr-[2px]'}">${a}</span>
    <span class="w-[72px] shrink-0 whitespace-nowrap border-b border-r border-[#e4e4e4] pl-[2px] font-['Liberation_Mono','Noto_Sans_CJK_SC',monospace] font-light">${b}</span>
    <span class="w-[72px] shrink-0 border-b border-r border-[#e4e4e4]"></span><span class="w-[72px] shrink-0 border-b border-r border-[#e4e4e4]"></span><span class="w-[72px] shrink-0 border-b border-r border-[#e4e4e4]"></span><span class="flex-1 border-b border-[#e4e4e4]"></span>
  </div>`;
}
document.getElementById('grid').innerHTML = rows;
</script>
</body>
</html>
